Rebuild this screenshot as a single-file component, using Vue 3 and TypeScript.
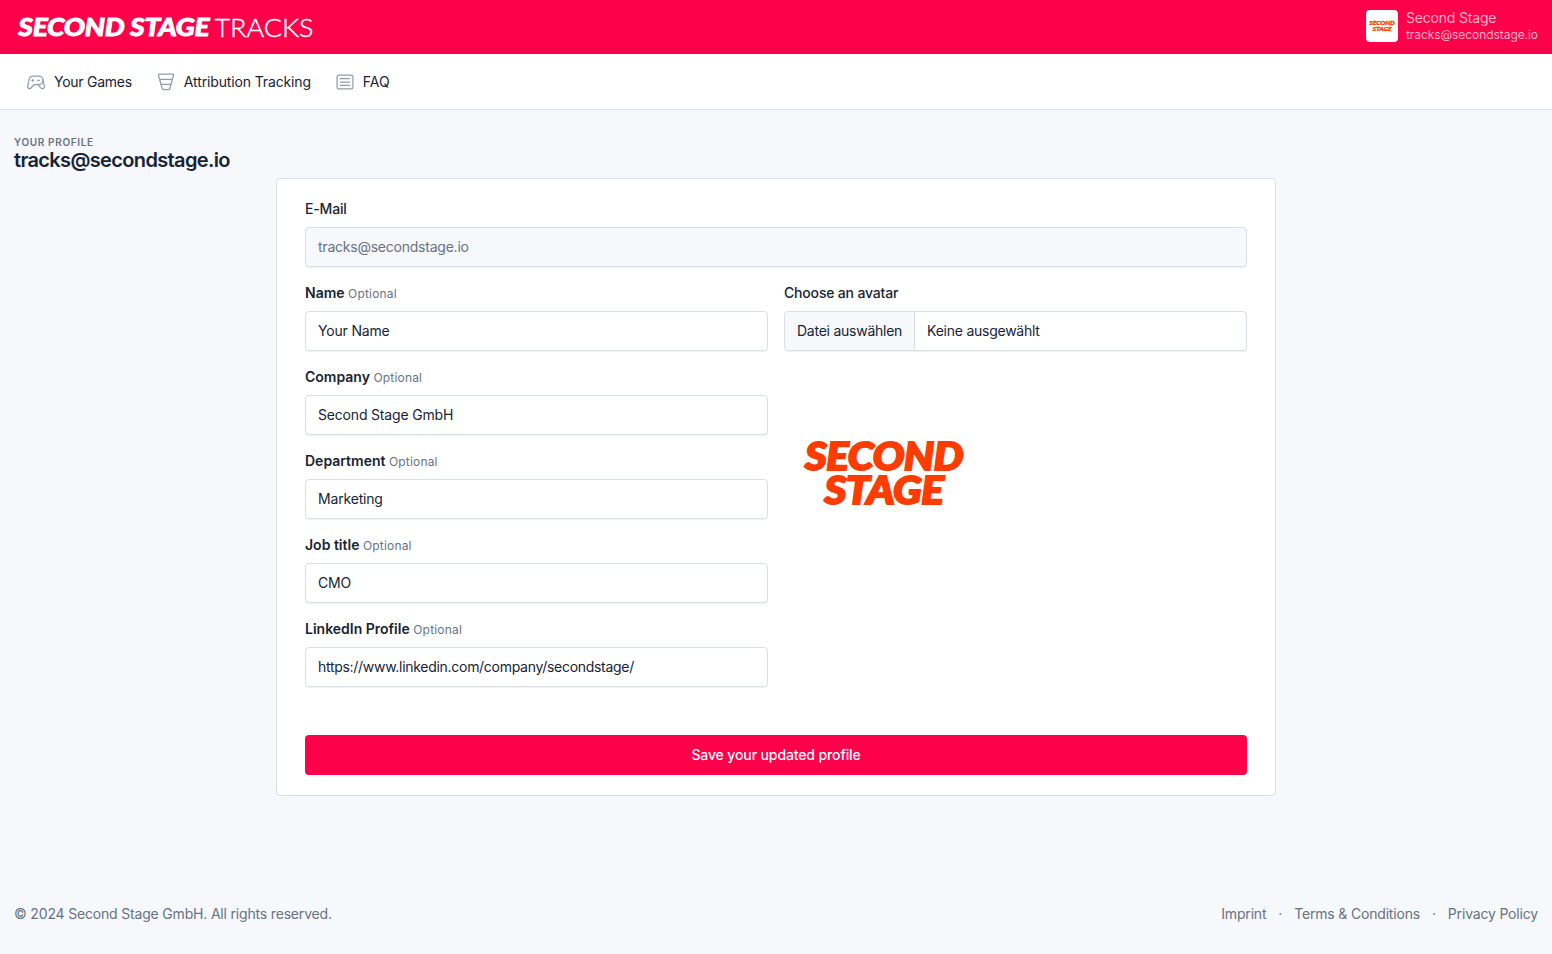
<script setup lang="ts">
interface Field {
  label: string
  value: string
  url?: boolean
}

const fields: Field[] = [
  { label: 'Name', value: 'Your Name' },
  { label: 'Company', value: 'Second Stage GmbH' },
  { label: 'Department', value: 'Marketing' },
  { label: 'Job title', value: 'CMO' },
  { label: 'LinkedIn Profile', value: 'https://www.linkedin.com/company/secondstage/', url: true },
]
</script>

<template>
  <div class="page">
    <header class="topbar">
      <svg class="brand" width="310" height="52" viewBox="0 0 310 52">
        <text class="brand-bold" x="4.300" y="36.200" textLength="191" lengthAdjust="spacingAndGlyphs">SECOND STAGE</text>
        <text class="brand-light" x="200.500" y="36.500" textLength="99" lengthAdjust="spacingAndGlyphs">TRACKS</text>
      </svg>
      <div class="user">
        <span class="avatar">
          <svg width="32" height="32" viewBox="0 0 200 200">
            <text class="logo-text" x="21" y="96.500" textLength="158" lengthAdjust="spacingAndGlyphs">SECOND</text>
            <text class="logo-text" x="40.500" y="130.500" textLength="119" lengthAdjust="spacingAndGlyphs">STAGE</text>
          </svg>
        </span>
        <div class="user-text">
          <div class="user-name">Second Stage</div>
          <div class="user-mail">tracks@secondstage.io</div>
        </div>
      </div>
    </header>

    <nav class="nav">
      <a class="nav-link">
        <svg class="icon" viewBox="0 0 24 24">
          <path d="M12 5h3.500a5 5 0 0 1 0 10h-5.500l-4.015 4.227a2.300 2.300 0 0 1 -3.923 -2.035l1.634 -8.173a5 5 0 0 1 4.904 -4.019h3.400z" />
          <path d="M14 15l4.070 4.284a2.300 2.300 0 0 0 3.925 -2.023l-1.600 -8.232" />
          <path d="M8 9v2M7 10h2M14 10h2" />
        </svg>
        <span class="games">Your Games</span>
      </a>
      <a class="nav-link">
        <svg class="icon" viewBox="0 0 24 24">
          <path d="M4.200 2.400h15.600a1.200 1.200 0 0 1 1.200 1.500l-4.300 15.600a2.300 2.300 0 0 1 -2.200 1.700h-5a2.300 2.300 0 0 1 -2.200 -1.700l-4.300 -15.600a1.200 1.200 0 0 1 1.200 -1.500z" />
          <path d="M4.600 8.800h14.800M6.200 14.800h11.600" />
        </svg>
        <span class="tracking">Attribution Tracking</span>
      </a>
      <a class="nav-link">
        <svg class="icon" viewBox="0 0 24 24">
          <rect x="2.500" y="3.800" width="19" height="16.400" rx="2" />
          <path d="M6.500 8h11M6.500 12h11M6.500 16h11" />
        </svg>
        <span class="faq">FAQ</span>
      </a>
    </nav>

    <div class="heading">
      <div class="pretitle">Your profile</div>
      <h2 class="title">tracks@secondstage.io</h2>
    </div>

    <main class="card">
      <div class="field">
        <label class="label">E-Mail</label>
        <div class="input disabled">tracks@secondstage.io</div>
      </div>
      <div class="columns">
        <div class="column">
          <div v-for="f in fields" :key="f.label" class="field">
            <label class="label strong">{{ f.label }} <span class="optional">Optional</span></label>
            <div class="input" :class="{ url: f.url }">{{ f.value }}</div>
          </div>
        </div>
        <div class="column">
          <div class="field">
            <label class="label">Choose an avatar</label>
            <div class="input file">
              <span class="file-button">Datei auswählen</span>
              <span class="file-name">Keine ausgewählt</span>
            </div>
          </div>
          <svg class="preview" width="200" height="200" viewBox="0 0 200 200">
            <text class="logo-text" x="21" y="96.500" textLength="158" lengthAdjust="spacingAndGlyphs">SECOND</text>
            <text class="logo-text" x="40.500" y="130.500" textLength="119" lengthAdjust="spacingAndGlyphs">STAGE</text>
          </svg>
        </div>
      </div>
      <button class="save" type="button">Save your updated profile</button>
    </main>

    <footer class="footer">
      <span>© 2024 Second Stage GmbH. All rights reserved.</span>
      <div class="links">
        <a>Imprint</a><span>·</span><a>Terms &amp; Conditions</a><span>·</span><a>Privacy Policy</a>
      </div>
    </footer>
  </div>
</template>

<style>
body {
  background: #f6f8fb;
}
</style>

<style scoped>
* {
  box-sizing: border-box;
}
.page {
  display: flex;
  flex-direction: column;
  height: 954px;
  background: #f6f8fb;
  color: #182433;
  font-family: Inter, "Liberation Sans", sans-serif;
  font-size: 14px;
  line-height: 20px;
  letter-spacing: -0.18px;
}
.topbar {
  display: flex;
  flex: none;
  align-items: center;
  justify-content: space-between;
  height: 54px;
  padding: 0 14px 2px;
  background: #ff004a;
}
.brand {
  display: block;
}
.brand-bold {
  fill: #fff;
  stroke: #fff;
  stroke-width: 0.9;
  font: italic 900 24px Lato, sans-serif;
  letter-spacing: -0.2px;
}
.brand-light {
  fill: #fff;
  stroke: #fff;
  stroke-width: 0.4;
  font: 300 24.5px Lato, sans-serif;
  letter-spacing: 0;
}
.logo-text {
  fill: #ff3c00;
  stroke: #ff3c00;
  stroke-width: 2;
  font: italic 900 37.5px Lato, sans-serif;
  letter-spacing: -0.3px;
}
.user {
  display: flex;
  align-items: flex-start;
  gap: 8px;
  color: rgba(255, 255, 255, 0.7);
}
.avatar {
  width: 32px;
  height: 32px;
  border-radius: 4px;
  background: #fff;
}
.avatar svg {
  display: block;
}
.user-text {
  height: 32px;
}
.user-name {
  line-height: 16px;
}
.user-mail {
  margin-top: 1px;
  font-size: 12px;
  line-height: 16px;
  letter-spacing: -0.06px;
}
.nav {
  display: flex;
  flex: none;
  align-items: center;
  gap: 24px;
  height: 56px;
  padding-left: 26px;
  background: #fff;
  border-bottom: 1px solid #dadfe5;
}
.nav-link {
  display: flex;
  align-items: center;
  gap: 8px;
}
.games {
  letter-spacing: -0.26px;
}
.tracking {
  letter-spacing: -0.14px;
}
.faq {
  letter-spacing: 0;
}
.icon {
  width: 20px;
  height: 20px;
  fill: none;
  stroke: #929dab;
  stroke-width: 1.5;
  stroke-linecap: round;
  stroke-linejoin: round;
}
.heading {
  padding: 24px 14px 0;
}
.pretitle {
  color: #667382;
  font-size: 10px;
  font-weight: 600;
  letter-spacing: 0.66px;
  line-height: 16px;
  text-transform: uppercase;
}
.title {
  margin: 0;
  font-size: 20px;
  font-weight: 600;
  line-height: 20px;
  letter-spacing: -0.65px;
}
.card {
  width: 1000px;
  height: 618px;
  margin: 8px auto 0;
  padding: 20px 28px;
  background: #fff;
  border: 1px solid #dadfe5;
  border-radius: 4px;
}
.field {
  margin-bottom: 16px;
}
.label {
  display: block;
  height: 20px;
  margin-bottom: 8px;
  font-weight: 500;
}
.strong {
  font-weight: 600;
  letter-spacing: 0;
}
.optional {
  color: #667382;
  font-size: 12px;
  font-weight: 400;
  letter-spacing: 0.18px;
}
.input {
  height: 40px;
  padding: 9px 12px;
  background: #fff;
  border: 1px solid #dadfe5;
  border-radius: 4px;
  box-shadow: 0 1px 1px rgba(24, 36, 51, 0.06);
}
.disabled {
  background: #f6f8fb;
  color: #667382;
  letter-spacing: -0.23px;
}
.url {
  letter-spacing: -0.29px;
}
.columns {
  display: grid;
  grid-template-columns: 1fr 1fr;
  gap: 16px;
}
.file {
  display: flex;
  padding: 0;
  overflow: hidden;
  letter-spacing: -0.25px;
}
.file-button {
  padding: 9px 12px;
  background: #f6f8fb;
  border-right: 1px solid #dadfe5;
}
.file-name {
  padding: 9px 12px;
}
.preview {
  display: block;
  margin-top: 22px;
}
.save {
  display: block;
  width: 100%;
  height: 40px;
  margin-top: 32px;
  border: 0;
  border-radius: 4px;
  background: #ff004a;
  color: #fff;
  font: 500 14px/20px Inter, "Liberation Sans", sans-serif;
  letter-spacing: -0.12px;
}
.footer {
  display: flex;
  justify-content: space-between;
  margin-top: auto;
  padding: 0 14px 30px;
  color: #667382;
}
.links {
  display: flex;
  gap: 12px;
}
</style>
